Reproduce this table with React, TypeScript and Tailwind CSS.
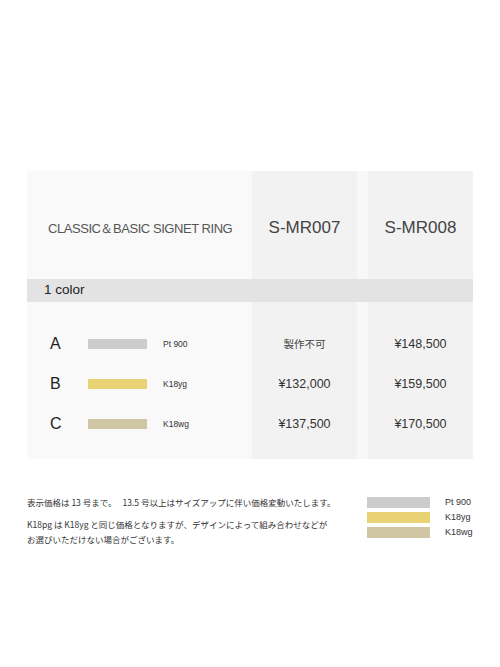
const sans = "font-['Liberation_Sans','Arial',sans-serif]";
const jp = "font-['Noto_Sans_CJK_JP',sans-serif]";

const rows = [
  { letter: "A", color: "bg-[#cccccc]", metal: "Pt 900", p7: "製作不可", p8: "¥148,500" },
  { letter: "B", color: "bg-[#e9d274]", metal: "K18yg", p7: "¥132,000", p8: "¥159,500" },
  { letter: "C", color: "bg-[#d0c6a4]", metal: "K18wg", p7: "¥137,500", p8: "¥170,500" },
];

const Price = ({ value }: { value: string }) =>
  value.startsWith("¥") ? (
    <span className={`${sans} text-[12.5px] text-[#333]`}>{value}</span>
  ) : (
    <span className={`${jp} text-[10.5px] text-[#444]`}>{value}</span>
  );

const App = (): JSX.Element => {
  return (
    <div className="min-h-[667px] bg-white pt-[171px] px-[27px]">
      <div className="grid grid-cols-[225px_105px_11px_105px]">
        {/* header */}
        <div className="h-[108px] bg-[#f9f9f9] flex items-center pl-[21px] pt-[8px]">
          <span className={`${sans} text-[13px] tracking-[-0.45px] text-[#555]`}>
            CLASSIC＆BASIC SIGNET RING
          </span>
        </div>
        <div className="h-[108px] bg-[#f2f2f2] flex items-center justify-center pt-[6px]">
          <span className={`${sans} text-[17px] text-[#444]`}>S-MR007</span>
        </div>
        <div className="h-[108px] bg-[#f8f8f8]" />
        <div className="h-[108px] bg-[#f2f2f2] flex items-center justify-center pt-[6px]">
          <span className={`${sans} text-[17px] text-[#444]`}>S-MR008</span>
        </div>

        {/* band */}
        <div className="col-span-4 h-[23px] bg-[#e3e3e3] flex items-center pl-[17px]">
          <span className={`${sans} text-[13.5px] text-[#222]`}>1 color</span>
        </div>

        {/* body */}
        <div className="bg-[#f9f9f9] pt-[22px] pb-[15px]">
          {rows.map((r) => (
            <div key={r.letter} className="h-[40px] flex items-center">
              <span className={`${sans} w-[61px] pl-[23px] text-[16px] text-[#222]`}>{r.letter}</span>
              <div className={`w-[59px] h-[10px] ${r.color}`} />
              <span className={`${sans} ml-[16px] text-[8.5px] text-[#333]`}>{r.metal}</span>
            </div>
          ))}
        </div>
        <div className="bg-[#f2f2f2] pt-[22px] pb-[15px]">
          {rows.map((r) => (
            <div key={r.letter} className="h-[40px] flex items-center justify-center">
              <Price value={r.p7} />
            </div>
          ))}
        </div>
        <div className="bg-[#f8f8f8]" />
        <div className="bg-[#f2f2f2] pt-[22px] pb-[15px]">
          {rows.map((r) => (
            <div key={r.letter} className="h-[40px] flex items-center justify-center">
              <Price value={r.p8} />
            </div>
          ))}
        </div>
      </div>

      {/* notes */}
      <div className="flex mt-[36px]">
        <div className={`${jp} flex-1 text-[8.5px] leading-[15px] text-[#333]`}>
          <p>表示価格は 13 号まで。　 13.5 号以上はサイズアップに伴い価格変動いたします。</p>
          <p className="mt-[7px]">K18pg は K18yg と同じ価格となりますが、デザインによって組み合わせなどが</p>
          <p>お選びいただけない場合がございます。</p>
        </div>
        <div className="w-[106px] mt-[2px] flex flex-col gap-[4px]">
          {rows.map((r) => (
            <div key={r.letter} className="flex items-center h-[11px]">
              <div className={`w-[63px] h-[11px] ${r.color}`} />
              <span className={`${sans} ml-[15px] text-[9px] text-[#333]`}>{r.metal}</span>
            </div>
          ))}
        </div>
      </div>
    </div>
  );
};

export default App;
